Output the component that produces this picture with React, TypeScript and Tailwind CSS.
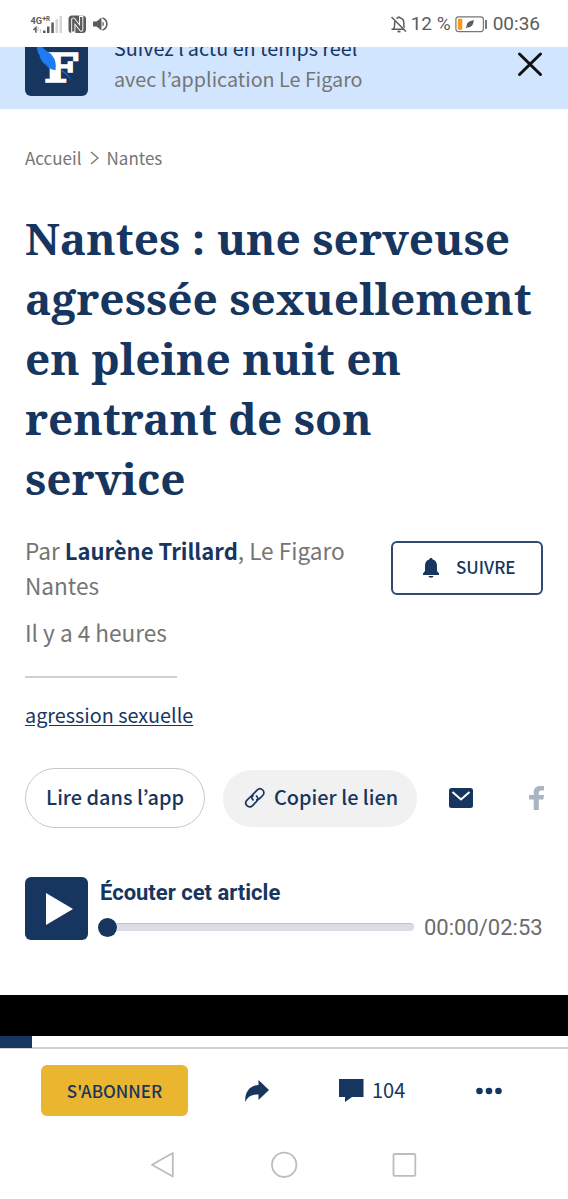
import React from 'react';

const SANS = "font-['Noto_Sans_CJK_KR','Open_Sans',sans-serif]";

const SignalIcon: React.FC = () => (
  <svg width="32" height="20" viewBox="30 13 32 20" className="shrink-0">
    <g fill="#5c5c5c" fontFamily="Roboto, sans-serif" fontWeight="700">
      <text x="30.500" y="22.600" fontSize="9.500" textLength="11.500" lengthAdjust="spacingAndGlyphs">4G</text>
      <text x="42" y="19.600" fontSize="8">+</text>
      <text x="46" y="20" fontSize="6.500" textLength="4" lengthAdjust="spacingAndGlyphs">R</text>
    </g>
    <path d="M33.500 29l2.400-2.400v5.200" fill="none" stroke="#5c5c5c" strokeWidth="1.500" />
    <path d="M38 26v4M40.500 28v4" stroke="#cfcfcf" strokeWidth="1.300" />
    <path d="M43 29.500h2.500V32H43zM47 25.500h2.500V32H47zM51.300 21.500h2.500V32h-2.500z" fill="#5c5c5c" />
    <path d="M55.500 18H58v14h-2.500zM59.500 15H62v17h-2.500z" fill="#d4d4d4" />
  </svg>
);

const NfcIcon: React.FC = () => (
  <svg width="19" height="19" viewBox="0 0 19 19" className="shrink-0">
    <rect x="0.500" y="0.500" width="17.500" height="17.500" rx="3.500" fill="#5c5c5c" />
    <path d="M5.300 18V4.500l7.900 10V0.500" fill="none" stroke="#fff" strokeWidth="4.200" strokeLinejoin="round" />
    <path d="M5.300 16.500V4.500l7.900 10V2" fill="none" stroke="#5c5c5c" strokeWidth="2.300" strokeLinejoin="round" />
  </svg>
);

const SpeakerIcon: React.FC = () => (
  <svg width="16" height="16" viewBox="0 0 16 16" className="shrink-0">
    <path d="M0 5.500h3.500L8.500 1.500v13L3.500 10.500H0z" fill="#5c5c5c" />
    <path d="M9.500 5.300a3.300 3.300 0 010 5.400z" fill="#5c5c5c" />
    <path d="M9.500 2a6.300 6.300 0 010 12" fill="none" stroke="#5c5c5c" strokeWidth="1.500" />
  </svg>
);

const BellOffIcon: React.FC = () => (
  <svg width="18" height="19" viewBox="0 0 18 19" className="shrink-0" fill="none" stroke="#5c5c5c" strokeWidth="1.500">
    <path d="M1.500 2L16 16.500M1.500 14.200h12M3.300 14c1-1 1.300-2 1.300-3.500V8c0-1 .2-1.700.6-2.300M6.500 3.600c.4-.3.800-.4 1.200-.5C8 1.500 10 1.500 10.300 3.100c2 .4 3.500 2.300 3.500 4.600v2.500c0 1 .2 1.800.7 2.500" />
    <path d="M7.500 16.500h3" strokeWidth="1.800" />
  </svg>
);

const BatteryIcon: React.FC = () => (
  <svg width="33" height="17" viewBox="0 0 33 17" className="shrink-0">
    <rect x="0.900" y="0.900" width="27.500" height="14.700" rx="2.500" fill="none" stroke="#777" strokeWidth="1.200" />
    <rect x="2.800" y="2.800" width="4.500" height="11" fill="#f7991f" />
    <path d="M10.500 12.500c.3-1 .5-1.300 1-2 .2-3.500 2.500-5.700 7.300-6.200-.3 4.500-2.600 7.500-6.600 7.200z" fill="#5c5c5c" />
    <path d="M30 4h2v9h-2z" fill="#777" />
  </svg>
);

const FigaroLogo: React.FC = () => (
  <svg width="63" height="49" viewBox="25 47 63 49" className="shrink-0">
    <path d="M25 47h63v43a6 6 0 01-6 6H31a6 6 0 01-6-6z" fill="#17365f" />
    <text x="44" y="81.500" fontFamily="'DejaVu Serif', serif" fontWeight="700" fontSize="38.500" textLength="34" lengthAdjust="spacingAndGlyphs" fill="#fff" stroke="#fff" strokeWidth="1.600">F</text>
    <path d="M37 47c0 4 1.500 7 3 9l-.5.500c1.500 4.500 4.500 7.500 8 9.500l-.5.800c2.500 2 5 3 8.500 3.400l.3-4c0-6-2-9-4-11l-.3-1C47.500 51 44 50 42.500 47z" fill="#1e7bf0" />
    <path d="M61.500 70c4 2 8 6 10.500 10.500-4-4.500-7-7-10.500-9z" fill="#1e6fd8" />
  </svg>
);

const StatusBar: React.FC = () => (
  <header className="flex h-[47px] shrink-0 items-center bg-white pl-[30px] pr-7 pt-px font-['Roboto',sans-serif] text-[19px] text-[#5c5c5c]">
    <div className="flex items-center gap-1.5">
      <SignalIcon />
      <NfcIcon />
      <SpeakerIcon />
    </div>
    <div className="ml-auto flex items-center">
      <BellOffIcon />
      <span className="ml-[3px]">12 %</span>
      <span className="ml-1"><BatteryIcon /></span>
      <span className="ml-[5px]">00:36</span>
    </div>
  </header>
);

const AppBanner: React.FC = () => (
  <div className="flex h-[62px] shrink-0 overflow-hidden bg-[#d2e5ff] pl-[25px]">
    <FigaroLogo />
    <div className="-mt-[15px] ml-[26px] whitespace-nowrap text-[19.750px] leading-[31px]">
      <p className="text-[#17365f]">Suivez l’actu en temps réel</p>
      <p className="text-[#757575]">avec l’application Le Figaro</p>
    </div>
    <button aria-label="Fermer" className="ml-auto mr-[25px] mt-1 h-[26px] w-[26px]">
      <svg width="26" height="26" viewBox="0 0 26 26">
        <path d="M2.500 3l21 20.500M23.500 3l-21 20.500" stroke="#111" strokeWidth="3" strokeLinecap="round" />
      </svg>
    </button>
  </div>
);

const Byline: React.FC = () => (
  <div className="mt-[25px] flex justify-between">
    <div className="whitespace-nowrap text-[22.600px] leading-[35px] text-[#757575]">
      <p>
        Par <span className="text-[22px] font-bold text-[#17365f]">Laurène Trillard</span>, Le Figaro
        <br />
        Nantes
      </p>
      <p className="mt-3">Il y a 4 heures</p>
    </div>
    <button className="mt-2 flex h-[54px] w-[152px] items-center rounded-md border-2 border-[#17365f]/90 pl-7 text-[#17365f]">
      <svg width="20" height="22" viewBox="0 0 20 22">
        <path d="M10 1c1 0 1.700.7 1.700 1.600 3 .7 4.300 3.100 4.300 6.400v5l2 2.500V18H2v-1.500L4 14V9c0-3.300 1.300-5.700 4.300-6.400C8.300 1.700 9 1 10 1zM7.500 19h5a2.500 1.800 0 01-5 0z" fill="currentColor" />
      </svg>
      <span className="-mt-0.5 ml-[15px] text-[17px] font-medium">SUIVRE</span>
    </button>
  </div>
);

const ShareRow: React.FC = () => (
  <div className="mt-[37px] flex h-[60px] items-center whitespace-nowrap text-[19.900px] font-medium text-[#17365f]">
    <button className="h-[60px] w-[180px] shrink-0 rounded-full border-[1.500px] border-[#c8c8c8] pb-0.5">Lire dans l’app</button>
    <button className="ml-[18px] flex h-[57px] w-[194px] shrink-0 items-center rounded-full bg-[#f1f1f1] pl-[21px]">
      <svg width="22" height="22" viewBox="0 0 22 22" fill="none" stroke="currentColor" strokeWidth="1.700" strokeLinecap="round">
        <path d="M9 12.800c-1.700-1.700-1.700-3.800-.1-5.400l4.200-4.300c1.700-1.700 4-1.700 5.600-.1 1.600 1.600 1.600 3.900 0 5.500l-3.200 3.200c-.8.800-1.800 1.200-2.800 1.100" />
        <path d="M12.500 9c1.700 1.700 1.700 3.800.1 5.400l-4 4.200c-1.700 1.700-4 1.700-5.600.1-1.600-1.600-1.600-3.900 0-5.500l3.200-3.200C7 9.200 8 8.800 9 8.900" />
      </svg>
      <span className="-mt-0.5 ml-2">Copier le lien</span>
    </button>
    <svg width="24" height="20" viewBox="0 0 24 20" className="ml-8 shrink-0">
      <rect width="24" height="20" rx="2.500" fill="#17365f" />
      <path d="M3.500 4L12 11.500 20.500 4" fill="none" stroke="#fff" strokeWidth="2" />
    </svg>
    <svg width="15" height="24" viewBox="0 0 15 24" className="ml-14 shrink-0">
      <path d="M4.700 24V13.500H0V9h4.700V6.500C4.700 2.400 7 0 11 0h4v4.500h-2.500c-2 0-2.700.9-2.700 2.500v2H15l-.7 4.500H9.800V24z" fill="#a9b4c4" />
    </svg>
  </div>
);

const AudioPlayer: React.FC = () => (
  <div className="mt-[49px] flex h-[63px] font-['Roboto',sans-serif]">
    <button aria-label="Lecture" className="flex h-[63px] w-[63px] shrink-0 items-center justify-center rounded-md bg-[#17365f]">
      <svg width="28" height="32" viewBox="0 0 28 32" className="ml-1.5">
        <path d="M0 0l27 16L0 32z" fill="#fff" />
      </svg>
    </button>
    <div className="ml-3 flex-1">
      <p className="pt-px text-[22px] font-bold leading-[30px] text-[#17365f]">Écouter cet article</p>
      <div className="mt-[3px] flex h-8 items-center">
        <div className="-ml-0.5 flex w-[316px] items-center">
          <div className="h-[19px] w-[19px] shrink-0 rounded-full bg-[#17365f]" />
          <div className="h-2 flex-1 rounded-r-full border-t border-[#c5c1c9] bg-[#dfdbe5]" />
        </div>
        <span className="ml-[10px] text-[22px] text-[#6b6b6b]">00:00/02:53</span>
      </div>
    </div>
  </div>
);

const BottomBar: React.FC = () => (
  <div className="flex h-[83px] shrink-0 items-center pl-[41px] text-[#17365f]">
    <button className="h-[51px] w-[147px] rounded-md bg-[#eab52f] text-[17px] font-medium">S'ABONNER</button>
    <svg width="24" height="22" viewBox="0 0 24 22" className="ml-[57px]">
      <path d="M13.500 0L24 10 13.500 20v-5.500C7 14.500 3 16.500.3 22-.5 13 4 5.500 13.500 5z" fill="currentColor" />
    </svg>
    <svg width="25" height="23" viewBox="0 0 25 23" className="ml-[70px]">
      <path d="M0 0h24.500v18H13l-7 5v-5H0z" fill="currentColor" />
    </svg>
    <span className="-mt-0.5 ml-2 text-[20px]">104</span>
    <svg width="26" height="8" viewBox="0 0 26 8" className="ml-[71px]" fill="currentColor">
      <circle cx="3.500" cy="4" r="3.300" />
      <circle cx="13" cy="4" r="3.300" />
      <circle cx="22.500" cy="4" r="3.300" />
    </svg>
  </div>
);

const SystemNav: React.FC = () => (
  <nav className="flex h-[66px] shrink-0 items-center pl-[150px]">
    <svg width="267" height="30" viewBox="150 1150 267 30" fill="none" stroke="#bdbdbd" strokeWidth="1.800" strokeLinejoin="round">
      <path d="M172.800 1153v23.500L152 1164.800z" />
      <circle cx="284.200" cy="1164.800" r="12.200" />
      <rect x="393.500" y="1154" width="21.800" height="21.800" rx="1" />
    </svg>
  </nav>
);

const App: React.FC = () => {
  return (
    <div className={`flex h-[1199px] w-[568px] flex-col overflow-hidden bg-white ${SANS}`}>
      <StatusBar />
      <AppBanner />
      <main className="h-[886px] shrink-0 px-[25px]">
        <nav className="flex items-center pt-[37px] text-[17px] leading-6 text-[#757575]">
          <span>Accueil</span>
          <svg width="9" height="14" viewBox="0 0 9 14" fill="none" stroke="currentColor" strokeWidth="1.300" className="ml-2 mr-2">
            <path d="M1 1l7 6-7 6" />
          </svg>
          <span>Nantes</span>
        </nav>
        <h1 className="mt-[38px] whitespace-nowrap font-['Noto_Serif','DejaVu_Serif_Condensed','DejaVu_Serif',serif] text-[44.200px] font-bold leading-[60px] text-[#17365f]">
          Nantes : une serveuse
          <br />
          agressée sexuellement
          <br />
          en pleine nuit en
          <br />
          rentrant de son
          <br />
          service
        </h1>
        <Byline />
        <hr className="mt-[26px] w-[152px] border-t-2 border-[#cfcfcf]" />
        <a href="#" className="mt-[21px] block w-fit text-[19.800px] leading-8 text-[#17365f] underline underline-offset-2">
          agression sexuelle
        </a>
        <ShareRow />
        <AudioPlayer />
      </main>
      <div className="h-[41px] shrink-0 bg-black" />
      <div className="h-[13px] shrink-0 border-b-2 border-[#d0d0d0]">
        <div className="h-[12px] w-8 bg-[#17365f]" />
      </div>
      <BottomBar />
      <SystemNav />
    </div>
  );
};

export default App;
